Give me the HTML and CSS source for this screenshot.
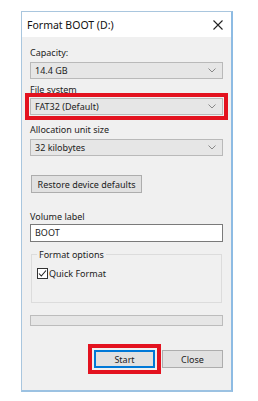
FILE: index.html
```html
<!DOCTYPE html>
<html lang="en">
<head>
    <meta charset="UTF-8">
    <meta name="viewport" content="width=device-width, initial-scale=1.0">
    <title>Format BOOT (D:)</title>
    <link rel="stylesheet" href="styles.css">
</head>
<body>
    <div class="janela">
        <div class="titulo">
            <span>Format BOOT (D:)</span>
            <svg class="fechar" width="10" height="10" viewBox="0 0 10 10">
                <path d="M0.5 0.5 L9.5 9.5 M9.5 0.5 L0.5 9.5" stroke="#222" stroke-width="1.1" fill="none"/>
            </svg>
        </div>
        <div class="conteudo">
            <label class="rotulo r-capacidade">Capacity:</label>
            <div class="combo c-capacidade">
                <span>14.4 GB</span>
                <svg width="8" height="5" viewBox="0 0 8 5"><path d="M0.5 0.5 L4 4 L7.5 0.5" stroke="#888" fill="none"/></svg>
            </div>

            <label class="rotulo r-sistema">File system</label>
            <div class="combo c-sistema destaque">
                <span>FAT32 (Default)</span>
                <svg width="8" height="5" viewBox="0 0 8 5"><path d="M0.5 0.5 L4 4 L7.5 0.5" stroke="#888" fill="none"/></svg>
            </div>

            <label class="rotulo r-alocacao">Allocation unit size</label>
            <div class="combo c-alocacao">
                <span>32 kilobytes</span>
                <svg width="8" height="5" viewBox="0 0 8 5"><path d="M0.5 0.5 L4 4 L7.5 0.5" stroke="#888" fill="none"/></svg>
            </div>

            <button class="botao restaurar">Restore device defaults</button>

            <label class="rotulo r-volume">Volume label</label>
            <div class="caixa-texto">BOOT</div>

            <fieldset class="opcoes">
                <legend>Format options</legend>
                <div class="check">
                    <svg width="11" height="11" viewBox="0 0 11 11">
                        <rect x="0.5" y="0.5" width="10" height="10" fill="#fff" stroke="#333"/>
                        <path d="M2 5.5 L4.3 8 L9 2.5" stroke="#222" stroke-width="1.1" fill="none"/>
                    </svg>
                    <span>Quick Format</span>
                </div>
            </fieldset>

            <div class="progresso"></div>

            <div class="acoes">
                <button class="botao iniciar destaque">Start</button>
                <button class="botao">Close</button>
            </div>
        </div>
    </div>
</body>
</html>
```

FILE: styles.css
```css
*{
    margin: 0;
    box-sizing: border-box;
}
:root{
    --fundo:#f0f0f0;
    --borda:#a9c6de;
    --vermelho:#e3121f;
    --combo:#e6e6e6;
}
body{
    background-color: white;
    font-family: "Noto Sans", "Open Sans", sans-serif;
    font-size: 9px;
    color: #222;
}
.janela{
    margin: 11px 0 0 21px;
    width: 212px;
    height: 381px;
    border: 1px solid var(--borda);
    border-right: 2px solid #8dbbe3;
    border-bottom: 2px solid #9cc2e2;
    background-color: var(--fundo);
    display: flex;
    flex-direction: column;
}
.titulo{
    height: 25px;
    background-color: white;
    display: flex;
    align-items: center;
    justify-content: space-between;
    padding: 0 8px 0 5px;
    font-size: 10.5px;
    color: #111;
}
.conteudo{
    display: flex;
    flex-direction: column;
    padding: 9px 8px 0 8px;
}
.rotulo{
    display: block;
    height: 13px;
    line-height: 13px;
}
.combo{
    height: 17px;
    background-color: var(--combo);
    border: 1px solid #b9b9b9;
    display: flex;
    align-items: center;
    justify-content: space-between;
    padding: 0 6px 0 4px;
}
.c-capacidade{ margin-top: 3px; }
.r-sistema{ margin-top: 4px; }
.c-sistema{ margin-top: 2px; }
.r-alocacao{ margin-top: 8px; }
.c-alocacao{ margin-top: 3px; }
.destaque{
    outline: 4px solid var(--vermelho);
    outline-offset: 1px;
}
.botao{
    height: 18px;
    font: inherit;
    color: #222;
    background-color: #e1e1e1;
    border: 1px solid #adadad;
    padding: 0;
}
.restaurar{
    margin-top: 19px;
    width: 111px;
    align-self: flex-start;
    margin-left: 1px;
}
.r-volume{ margin-top: 17px; }
.caixa-texto{
    margin-top: 1px;
    height: 18px;
    background-color: white;
    border: 1px solid #7a7a7a;
    padding-left: 4px;
    line-height: 16px;
}
.opcoes{
    margin: 6px 1px 0 1px;
    height: 55px;
    border: 1px solid #dcdcdc;
    padding: 0 5px;
}
.opcoes legend{
    padding: 0 2px;
    line-height: 13px;
    margin-left: 0;
}
.check{
    margin-top: 6px;
    display: flex;
    align-items: center;
    gap: 1px;
    height: 13px;
}
.progresso{
    margin-top: 12px;
    height: 11px;
    background-color: var(--combo);
    border: 1px solid #bcbcbc;
}
.acoes{
    margin-top: 24px;
    display: flex;
    justify-content: flex-end;
    gap: 7px;
}
.acoes .botao{
    width: 61px;
}
.iniciar{
    border: 2px solid #0078d7;
    outline-offset: 2px;
}
```
